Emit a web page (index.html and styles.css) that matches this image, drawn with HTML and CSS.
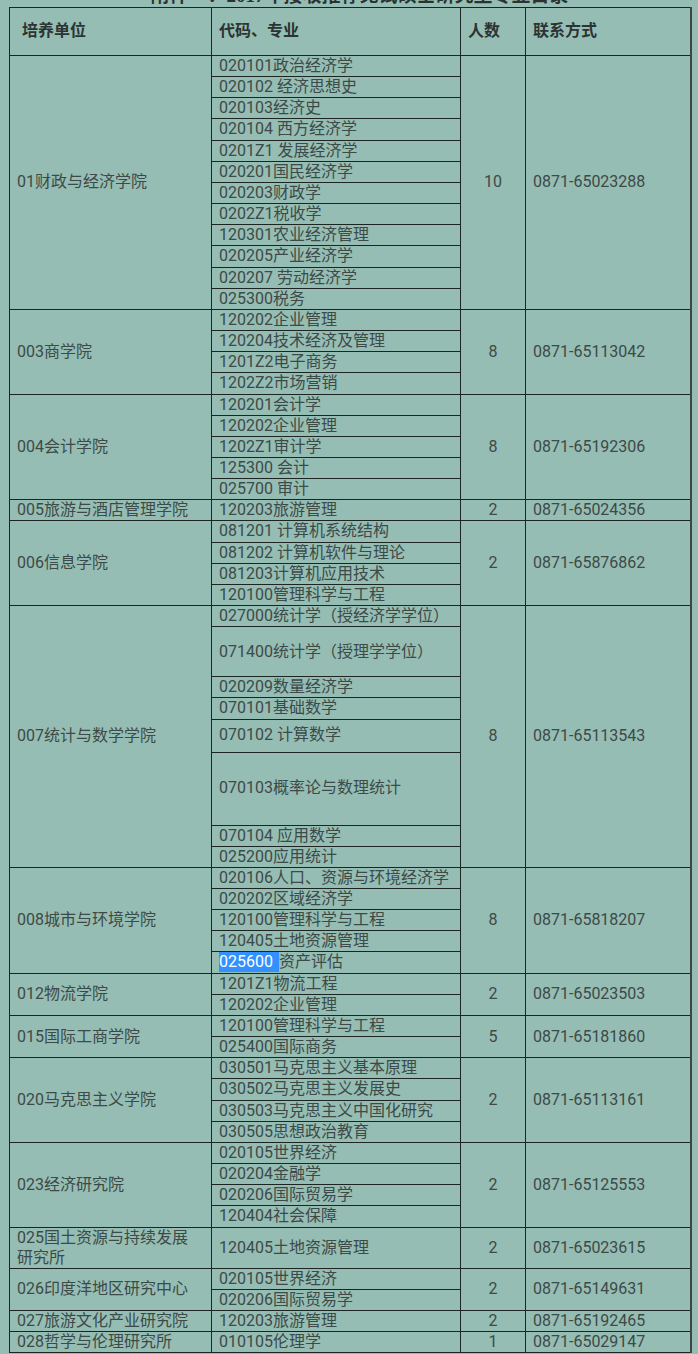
FILE: index.html
```html
<!DOCTYPE html>
<html lang="zh-CN">
<head>
<meta charset="utf-8">
<title>2017年接收推荐免试硕士研究生专业目录</title>
<link rel="stylesheet" href="styles.css">
</head>
<body>
<div class="title">附件一：2017年接收推荐免试硕士研究生专业目录</div>
<table class="catalog">
<colgroup>
<col class="c-unit"><col class="c-code"><col class="c-num"><col class="c-tel">
</colgroup>
<thead>
<tr><th class="h-unit">培养单位</th><th>代码、专业</th><th>人数</th><th>联系方式</th></tr>
</thead>
<tbody>
<tr><td class="unit" rowspan="12">01财政与经济学院</td><td class="code">020101政治经济学</td><td class="num" rowspan="12">10</td><td class="tel" rowspan="12">0871-65023288</td></tr>
<tr><td class="code">020102 经济思想史</td></tr>
<tr><td class="code">020103经济史</td></tr>
<tr><td class="code">020104 西方经济学</td></tr>
<tr><td class="code">0201Z1 发展经济学</td></tr>
<tr><td class="code">020201国民经济学</td></tr>
<tr><td class="code">020203财政学</td></tr>
<tr><td class="code">0202Z1税收学</td></tr>
<tr><td class="code">120301农业经济管理</td></tr>
<tr><td class="code">020205产业经济学</td></tr>
<tr><td class="code">020207 劳动经济学</td></tr>
<tr><td class="code">025300税务</td></tr>

<tr><td class="unit" rowspan="4">003商学院</td><td class="code">120202企业管理</td><td class="num" rowspan="4">8</td><td class="tel" rowspan="4">0871-65113042</td></tr>
<tr><td class="code">120204技术经济及管理</td></tr>
<tr><td class="code">1201Z2电子商务</td></tr>
<tr><td class="code">1202Z2市场营销</td></tr>

<tr><td class="unit" rowspan="5">004会计学院</td><td class="code">120201会计学</td><td class="num" rowspan="5">8</td><td class="tel" rowspan="5">0871-65192306</td></tr>
<tr><td class="code">120202企业管理</td></tr>
<tr><td class="code">1202Z1审计学</td></tr>
<tr><td class="code">125300 会计</td></tr>
<tr><td class="code">025700 审计</td></tr>

<tr><td class="unit">005旅游与酒店管理学院</td><td class="code">120203旅游管理</td><td class="num">2</td><td class="tel">0871-65024356</td></tr>

<tr><td class="unit" rowspan="4">006信息学院</td><td class="code">081201 计算机系统结构</td><td class="num" rowspan="4">2</td><td class="tel" rowspan="4">0871-65876862</td></tr>
<tr><td class="code">081202 计算机软件与理论</td></tr>
<tr><td class="code">081203计算机应用技术</td></tr>
<tr><td class="code">120100管理科学与工程</td></tr>

<tr><td class="unit" rowspan="8">007统计与数学学院</td><td class="code">027000统计学（授经济学学位）</td><td class="num" rowspan="8">8</td><td class="tel" rowspan="8">0871-65113543</td></tr>
<tr class="h50"><td class="code">071400统计学（授理学学位）</td></tr>
<tr><td class="code">020209数量经济学</td></tr>
<tr><td class="code">070101基础数学</td></tr>
<tr class="h33"><td class="code">070102 计算数学</td></tr>
<tr class="h73"><td class="code">070103概率论与数理统计</td></tr>
<tr><td class="code">070104 应用数学</td></tr>
<tr><td class="code">025200应用统计</td></tr>

<tr><td class="unit" rowspan="5">008城市与环境学院</td><td class="code">020106人口、资源与环境经济学</td><td class="num" rowspan="5">8</td><td class="tel" rowspan="5">0871-65818207</td></tr>
<tr><td class="code">020202区域经济学</td></tr>
<tr><td class="code">120100管理科学与工程</td></tr>
<tr><td class="code">120405土地资源管理</td></tr>
<tr><td class="code"><span class="sel">025600</span>资产评估</td></tr>

<tr><td class="unit" rowspan="2">012物流学院</td><td class="code">1201Z1物流工程</td><td class="num" rowspan="2">2</td><td class="tel" rowspan="2">0871-65023503</td></tr>
<tr><td class="code">120202企业管理</td></tr>

<tr><td class="unit" rowspan="2">015国际工商学院</td><td class="code">120100管理科学与工程</td><td class="num" rowspan="2">5</td><td class="tel" rowspan="2">0871-65181860</td></tr>
<tr><td class="code">025400国际商务</td></tr>

<tr><td class="unit" rowspan="4">020马克思主义学院</td><td class="code">030501马克思主义基本原理</td><td class="num" rowspan="4">2</td><td class="tel" rowspan="4">0871-65113161</td></tr>
<tr><td class="code">030502马克思主义发展史</td></tr>
<tr><td class="code">030503马克思主义中国化研究</td></tr>
<tr><td class="code">030505思想政治教育</td></tr>

<tr><td class="unit" rowspan="4">023经济研究院</td><td class="code">020105世界经济</td><td class="num" rowspan="4">2</td><td class="tel" rowspan="4">0871-65125553</td></tr>
<tr><td class="code">020204金融学</td></tr>
<tr><td class="code">020206国际贸易学</td></tr>
<tr><td class="code">120404社会保障</td></tr>

<tr><td class="unit">025国土资源与持续发展<br>研究所</td><td class="code">120405土地资源管理</td><td class="num">2</td><td class="tel">0871-65023615</td></tr>

<tr><td class="unit" rowspan="2">026印度洋地区研究中心</td><td class="code">020105世界经济</td><td class="num" rowspan="2">2</td><td class="tel" rowspan="2">0871-65149631</td></tr>
<tr><td class="code">020206国际贸易学</td></tr>

<tr><td class="unit">027旅游文化产业研究院</td><td class="code">120203旅游管理</td><td class="num">2</td><td class="tel">0871-65192465</td></tr>
<tr><td class="unit">028哲学与伦理研究所</td><td class="code">010105伦理学</td><td class="num">1</td><td class="tel">0871-65029147</td></tr>
</tbody>
</table>
</body>
</html>
```

FILE: styles.css
```css
html, body {
  margin: 0;
  padding: 0;
  background: #96bdb3;
}

body {
  font-family: Roboto, "Noto Sans CJK SC", sans-serif;
  color: #3c4a48;
  padding-left: 9px;
}

.title {
  font-family: "Liberation Serif", "Noto Sans CJK SC", serif;
  font-size: 19px;
  font-weight: 700;
  line-height: 22px;
  height: 22px;
  margin-top: -15px;
  margin-bottom: 0;
  text-align: center;
  width: 681px;
  padding-left: 20px;
  box-sizing: border-box;
  color: #2a3331;
  white-space: nowrap;
}

.catalog {
  border-collapse: collapse;
  table-layout: fixed;
  width: 681px;
  font-size: 16px;
  border-right: 2px solid #3a4744;
}

.c-unit { width: 202px; }
.c-code { width: 249px; }
.c-num { width: 65px; }
.c-tel { width: 165px; }

.catalog th,
.catalog td {
  border: 1px solid #1d2523;
  padding: 0 0 0 7px;
  line-height: 20.15px;
  vertical-align: middle;
  text-align: left;
  white-space: nowrap;
}

.catalog th {
  font-family: "Liberation Serif", "Noto Sans CJK SC", serif;
  height: 47px;
  font-weight: 700;
  color: #2b3432;
}

.catalog th.h-unit {
  padding-left: 12px;
}

.catalog td.num {
  text-align: center;
  padding: 0;
}

.h50 td { height: 49px; }
.h33 td { height: 32px; }
.h73 td { height: 72px; }

.sel {
  display: inline-block;
  background: #3390ff;
  color: #ffffff;
  height: 20px;
  line-height: 20px;
  padding-right: 6px;
  vertical-align: top;
}
```
